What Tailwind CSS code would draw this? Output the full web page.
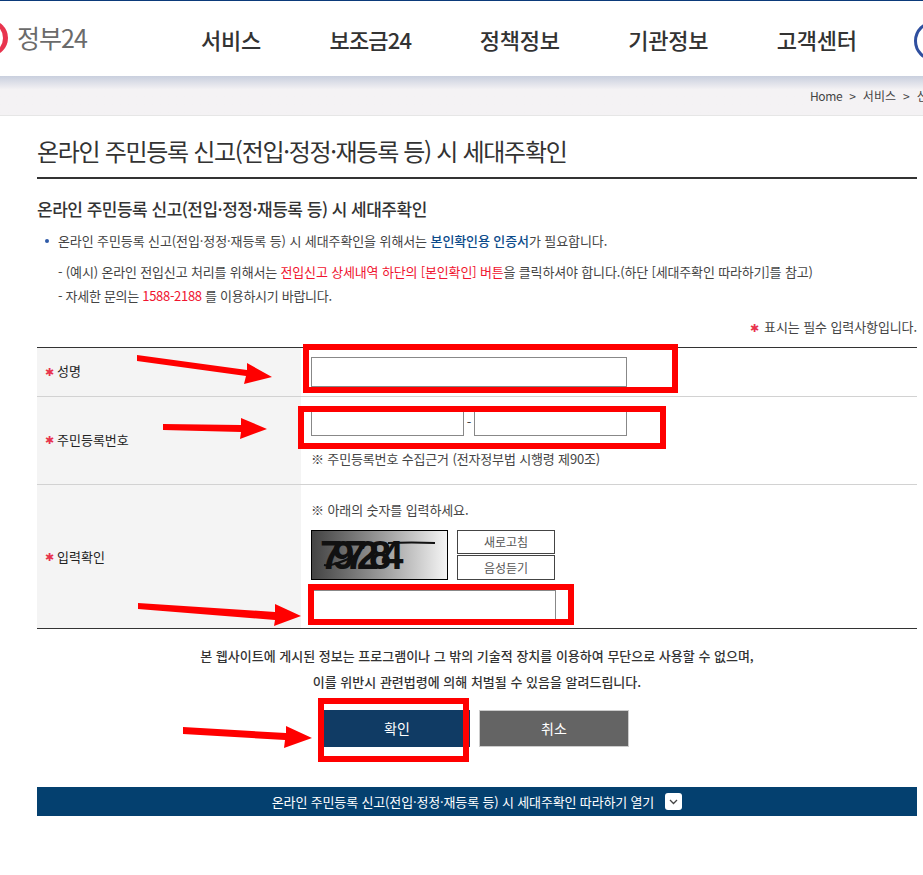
<!DOCTYPE html>
<html lang="ko">
<head>
<meta charset="UTF-8">
<title>온라인 주민등록 신고 시 세대주확인</title>
<script src="https://cdn.jsdelivr.net/npm/@tailwindcss/browser@4"></script>
</head>
<body class="bg-white font-['Noto_Sans_CJK_KR','Liberation_Sans',sans-serif] text-[#333]">
<div class="relative w-[923px] h-[875px] overflow-hidden">

  <!-- top nav -->
  <header class="h-[76px] border-t border-[#0b3a7a] bg-white flex items-center">
    <div class="w-[202px] shrink-0 flex items-center gap-[7px] -ml-[30px] mb-[2px]">
      <svg class="shrink-0" width="40" height="40" viewBox="0 0 40 40"><circle cx="20" cy="20" r="18" fill="#e8344e"/><circle cx="17" cy="20" r="16" fill="#fff"/><circle cx="15" cy="25" r="9" fill="#2f5aa8"/></svg>
      <span class="text-[25px] leading-none text-[#6b6b6b] tracking-[-1px] whitespace-nowrap">정부24</span>
    </div>
    <nav class="flex items-center gap-[68.5px] ml-[29px] mt-[2px] text-[22px] font-medium tracking-[-0.25px] text-[#333] whitespace-nowrap">
      <a>서비스</a><a class="tracking-[-0.8px]">보조금24</a><a>정책정보</a><a>기관정보</a><a>고객센터</a>
    </nav>
    <span class="ml-[57px] mt-[4px] shrink-0 w-[40px] h-[40px] rounded-full border-[3px] border-[#2f4f9f]"></span>
  </header>

  <!-- breadcrumb -->
  <div class="h-[40px] border-b border-[#e6e6e6] bg-gradient-to-b from-[#c9cfde] via-[#f4f2f4] via-[35%] to-[#f4f2f4] flex items-center pl-[810px] gap-[7px] text-[12px] text-[#444] whitespace-nowrap">
    <span class="tracking-[-0.4px]">Home</span><span>&gt;</span><span>서비스</span><span>&gt;</span><span>신</span>
  </div>

  <main class="pl-[37px] pr-[6px]">
    <h1 class="h-[63px] pt-[8px] flex items-center border-b-2 border-[#333] text-[24px] font-normal tracking-[-1.3px] text-[#333] whitespace-nowrap">온라인 주민등록 신고(전입·정정·재등록 등) 시 세대주확인</h1>
    <h2 class="mt-[18px] text-[17px] leading-[24px] font-medium tracking-[-0.5px] text-[#333] whitespace-nowrap">온라인 주민등록 신고(전입·정정·재등록 등) 시 세대주확인</h2>

    <ul class="mt-[8px] text-[13px] leading-[24px] text-[#444] whitespace-nowrap">
      <li class="flex items-center pl-[8px] tracking-[-0.1px]">
        <span class="w-[4px] h-[4px] rounded-full bg-[#2f5aa8] mr-[9px]"></span>
        <span>온라인 주민등록 신고(전입·정정·재등록 등) 시 세대주확인을 위해서는 <b class="font-medium text-[#0b4a8a]">본인확인용 인증서</b>가 필요합니다.</span>
      </li>
      <li class="pl-[21px] mt-[7px] tracking-[-0.16px]">- (예시) 온라인 전입신고 처리를 위해서는 <span class="text-[#f0142f]">전입신고 상세내역 하단의 [본인확인] 버튼</span>을 클릭하셔야 합니다.(하단 [세대주확인 따라하기]를 참고)</li>
      <li class="pl-[21px] tracking-[-0.3px]">- 자세한 문의는 <span class="text-[#f0142f]">1588-2188</span> 를 이용하시기 바랍니다.</li>
    </ul>

    <p class="mt-[9px] h-[20px] flex items-center justify-end text-[13px] tracking-[-0.1px] text-[#444] whitespace-nowrap">
      <span class="text-[#e8344e] text-[11px] mr-[5px]">✱</span>표시는 필수 입력사항입니다.
    </p>

    <!-- form table -->
    <div class="mt-[10px] border-t border-b border-[#333] text-[13px] text-[#444]">
      <div class="flex h-[49px] border-b border-[#d2d2d2]">
        <div class="w-[264px] bg-[#f4f4f4] flex items-center pl-[8px] pb-[2px] text-[#222]"><span class="text-[#e8344e] text-[11px] mr-[3px]">✱</span>성명</div>
        <div class="pl-[10px] pt-[9px]"><div class="w-[316px] h-[30px] border border-[#888] bg-white"></div></div>
      </div>
      <div class="flex h-[88px] border-b border-[#d2d2d2]">
        <div class="w-[264px] bg-[#f4f4f4] flex items-center pl-[8px] pb-[2px] text-[#222]"><span class="text-[#e8344e] text-[11px] mr-[3px]">✱</span>주민등록번호</div>
        <div class="pl-[10px] pt-[11px]">
          <div class="flex items-center">
            <div class="w-[153px] h-[28px] border border-[#888] bg-white"></div>
            <span class="w-[10px] text-center">-</span>
            <div class="w-[153px] h-[28px] border border-[#888] bg-white"></div>
          </div>
          <p class="mt-[13px] leading-[20px] tracking-[-0.15px] whitespace-nowrap">※ 주민등록번호 수집근거 (전자정부법 시행령 제90조)</p>
        </div>
      </div>
      <div class="flex h-[143px]">
        <div class="w-[264px] bg-[#f4f4f4] flex items-center pl-[8px] text-[#222]"><span class="text-[#e8344e] text-[11px] mr-[3px]">✱</span>입력확인</div>
        <div class="pl-[10px] pt-[15px]">
          <p class="leading-[20px] tracking-[-0.1px] whitespace-nowrap">※ 아래의 숫자를 입력하세요.</p>
          <div class="flex mt-[10px] gap-[9px]">
            <div class="relative w-[137px] h-[50px] border border-black bg-gradient-to-r from-[#444] to-[#f5f5f5] overflow-hidden">
              <span class="absolute left-[8px] top-[0px] text-[40px] leading-[48px] font-bold tracking-[-10px] text-[#111] font-['Liberation_Sans',sans-serif]">797284</span>
              <svg class="absolute inset-0" width="135" height="48" viewBox="0 0 135 48"><path d="M76 12 Q100 11 123 12M12 34 Q22 36 48 22" fill="none" stroke="#111" stroke-width="2"/></svg>
            </div>
            <div class="flex flex-col gap-[1px] w-[98px]">
              <button class="h-[24px] border border-[#444] text-[#555] text-[12px] leading-none">새로고침</button>
              <button class="h-[25px] border border-[#444] text-[#555] text-[12px] leading-none">음성듣기</button>
            </div>
          </div>
          <div class="mt-[10px] w-[245px] h-[30px] border border-[#888] bg-white"></div>
        </div>
      </div>
    </div>

    <!-- notice -->
    <div class="mt-[14px] text-center text-[13px] leading-[26px] font-medium text-[#333] whitespace-nowrap">
      <p>본 웹사이트에 게시된 정보는 프로그램이나 그 밖의 기술적 장치를 이용하여 무단으로 사용할 수 없으며,</p>
      <p>이를 위반시 관련법령에 의해 처벌될 수 있음을 알려드립니다.</p>
    </div>

    <div class="mt-[15px] flex justify-center gap-[9px] pr-[1px] text-[14px]">
      <button class="w-[146px] h-[37px] bg-[#103b64] text-white">확인</button>
      <button class="w-[150px] h-[37px] bg-[#646464] border border-[#ccc] text-white">취소</button>
    </div>

    <!-- guide bar -->
    <div class="mt-[40px] h-[29px] bg-[#04406f] text-white text-[13px] tracking-[-0.15px] flex items-center justify-center gap-[11px] whitespace-nowrap">
      <span>온라인 주민등록 신고(전입·정정·재등록 등) 시 세대주확인 따라하기 열기</span>
      <span class="w-[17px] h-[17px] rounded-[3px] bg-white flex items-center justify-center">
        <svg width="9" height="6" viewBox="0 0 9 6"><path d="M1 1l3.5 3.500L8 1" fill="none" stroke="#444" stroke-width="1.3"/></svg>
      </span>
    </div>
  </main>

  <!-- red annotations drawn over the screenshot -->
  <div class="absolute left-[303px] top-[344px] w-[375px] h-[49px] border-[6px] border-[#ff0000]"></div>
  <div class="absolute left-[298px] top-[406px] w-[368px] h-[43px] border-[6px] border-[#ff0000]"></div>
  <div class="absolute left-[308px] top-[584px] w-[266px] h-[41px] border-[6px] border-[#ff0000]"></div>
  <div class="absolute left-[318px] top-[698px] w-[151px] h-[64px] border-[6px] border-[#ff0000]"></div>
  <svg class="absolute inset-0 pointer-events-none" width="923" height="875" viewBox="0 0 923 875">
    <g fill="#ff0000" stroke="none">
      <path d="M137 355L137 361L246 376L244 384L272 377L247 363L247 370Z"/>
      <path d="M163 424L163 430L241 432L240 439L267 429L241 418L241 425Z"/>
      <path d="M138 603L138 609L275 620L274 626L301 616L275 604L275 612Z"/>
      <path d="M183 727L183 734L285 740L284 748L312 738L286 726L286 733Z"/>
    </g>
  </svg>
</div>
</body>
</html>
